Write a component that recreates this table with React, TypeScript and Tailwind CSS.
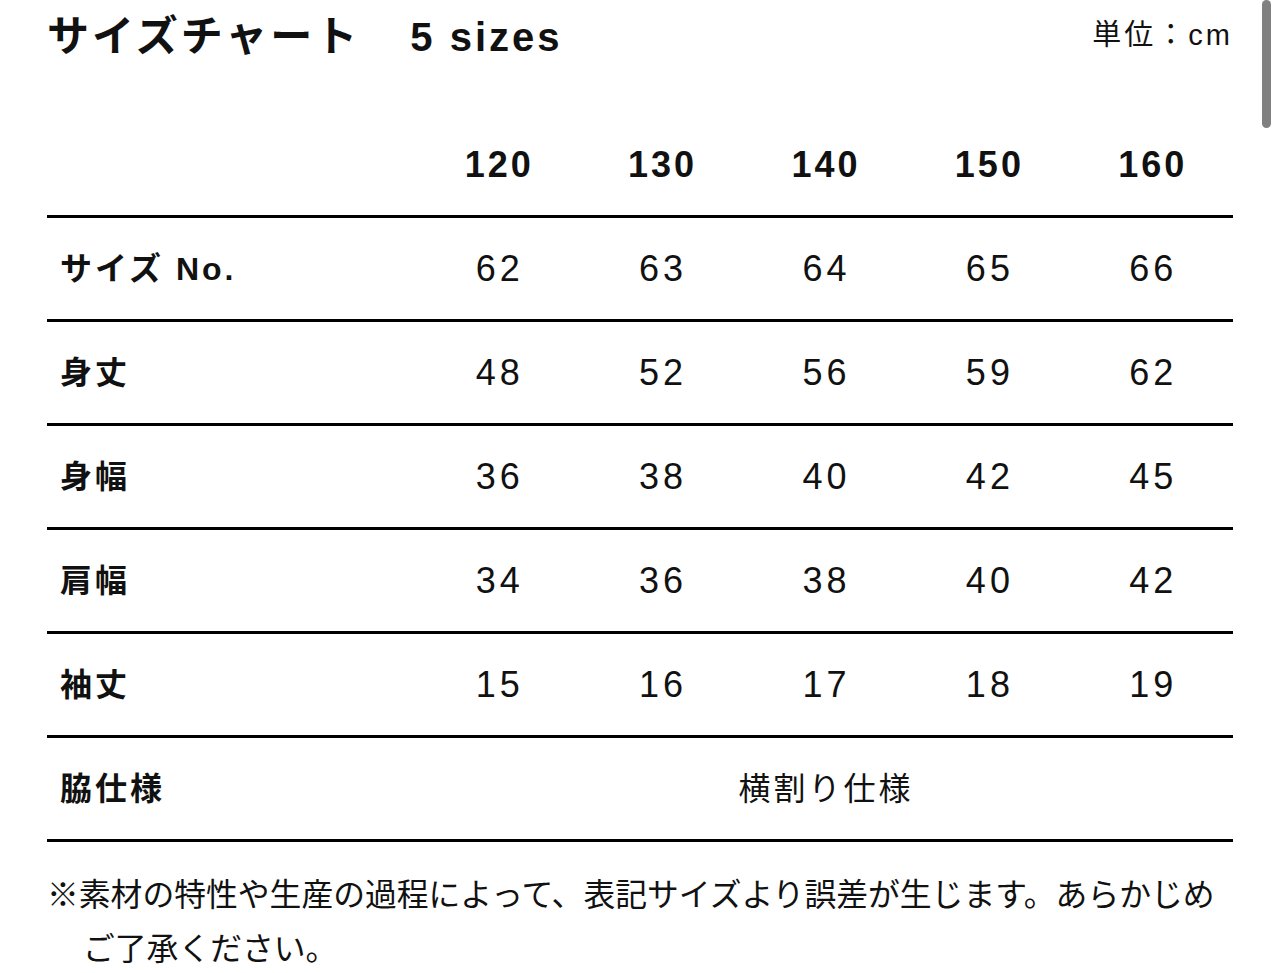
const sizes = ['120', '130', '140', '150', '160'];

const rows = [
  { label: 'サイズ No.', values: ['62', '63', '64', '65', '66'] },
  { label: '身丈', values: ['48', '52', '56', '59', '62'] },
  { label: '身幅', values: ['36', '38', '40', '42', '45'] },
  { label: '肩幅', values: ['34', '36', '38', '40', '42'] },
  { label: '袖丈', values: ['15', '16', '17', '18', '19'] },
];

const font = { fontFamily: '"Liberation Sans", "Noto Sans CJK JP", sans-serif' };

export default function App() {
  return (
    <div className="relative min-h-[973px] bg-white text-[#111]" style={font}>
      {/* overlay scrollbar */}
      <div className="absolute right-[9px] top-0 h-[128px] w-[9px] rounded-full bg-[#808080]" />

      <div className="px-[47px]">
        {/* heading */}
        <div className="flex h-[72px] items-center justify-between">
          <div className="flex items-baseline font-semibold">
            <span className="text-[42px] tracking-[3px]">サイズチャート</span>
            <span className="ml-[50px] text-[40px] font-bold tracking-[3px]">5 sizes</span>
          </div>
          <span className="text-[29px] tracking-[3px]">単位：cm</span>
        </div>

        {/* table */}
        <div className="mt-[42px]">
          <div className="grid h-[104px] grid-cols-[369px_repeat(5,1fr)] items-center border-b-[3px] border-black">
            <div />
            {sizes.map((s) => (
              <div key={s} className="pl-[3px] text-center text-[36px] font-bold tracking-[3px]">
                {s}
              </div>
            ))}
          </div>

          {rows.map((r) => (
            <div
              key={r.label}
              className="grid h-[104px] grid-cols-[369px_repeat(5,1fr)] items-center border-b-[3px] border-black"
            >
              <div className="pl-[13px] text-[32px] font-semibold tracking-[3px]">{r.label}</div>
              {r.values.map((v, i) => (
                <div key={i} className="pl-[4px] text-center text-[36px] tracking-[4px]">
                  {v}
                </div>
              ))}
            </div>
          ))}

          <div className="grid h-[104px] grid-cols-[369px_1fr] items-center border-b-[3px] border-black">
            <div className="pl-[13px] text-[32px] font-semibold tracking-[3px]">脇仕様</div>
            <div className="pl-[3px] text-center text-[32px] tracking-[3px]">横割り仕様</div>
          </div>
        </div>

        {/* note */}
        <p className="mt-[26px] pl-[36px] -indent-[36px] text-[31.8px] leading-[54px]">
          ※素材の特性や生産の過程によって、表記サイズより誤差が生じます。あらかじめご了承ください。
        </p>
      </div>
    </div>
  );
}
